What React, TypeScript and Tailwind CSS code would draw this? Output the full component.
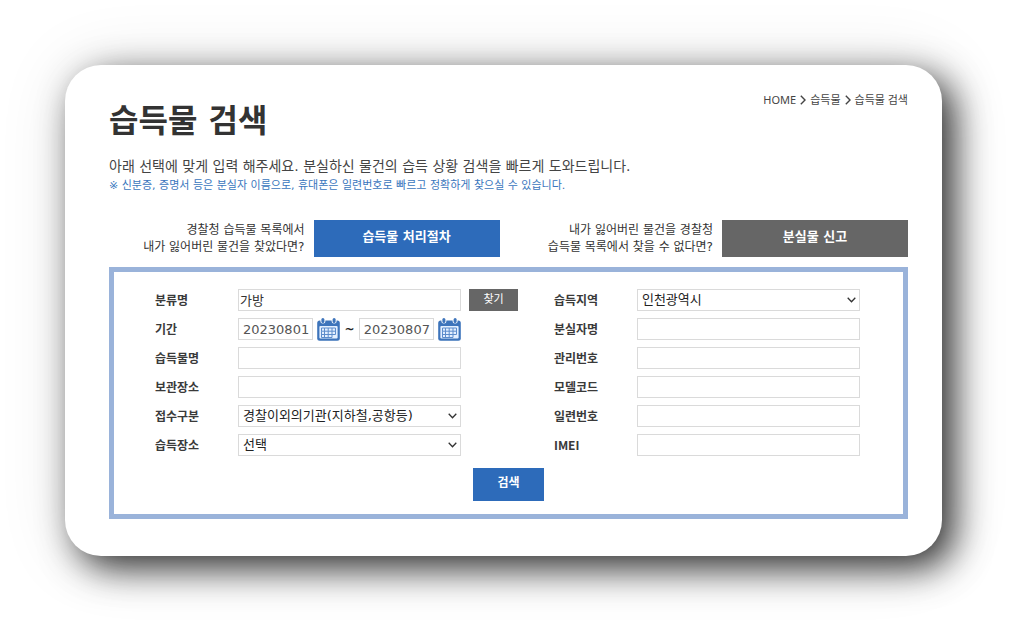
import React, { useState } from "react";

interface Field {
  id: string;
  label: string;
  options?: string[];
}

const leftFields: Field[] = [
  { id: "itemName", label: "습득물명" },
  { id: "storage", label: "보관장소" },
  { id: "receipt", label: "접수구분", options: ["경찰이외의기관(지하철,공항등)", "경찰관서"] },
  { id: "place", label: "습득장소", options: ["선택", "지하철", "공항"] },
];

const rightFields: Field[] = [
  { id: "region", label: "습득지역", options: ["인천광역시", "서울특별시", "부산광역시"] },
  { id: "owner", label: "분실자명" },
  { id: "manageNo", label: "관리번호" },
  { id: "model", label: "모델코드" },
  { id: "serial", label: "일련번호" },
  { id: "imei", label: "IMEI" },
];

const inputClass =
  "block h-[22px] w-full rounded-none border border-[#dadada] bg-white px-px pb-px text-[13px] leading-5 text-[#333] outline-none";

const ChevronRight = () => (
  <svg className="h-[10px] w-[6px]" viewBox="0 0 6 10" fill="none" stroke="#444" strokeWidth="1.4" aria-hidden="true">
    <path d="M0.8 0.8L5 5L0.8 9.2" />
  </svg>
);

const CalendarIcon = () => (
  <svg className="h-[23px] w-[23px]" viewBox="0 0 23 23" aria-hidden="true">
    <rect x="0.2" y="2.5" width="22.6" height="20.3" rx="2.5" fill="#3d74bb" />
    <rect x="2.4" y="8" width="18.2" height="12.4" rx="1" fill="#e3efff" />
    <rect x="3.4" y="-1" width="5" height="6.6" rx="2.5" fill="#fff" />
    <rect x="14.6" y="-1" width="5" height="6.6" rx="2.5" fill="#fff" />
    <rect x="4.4" y="0" width="3" height="5" rx="1.5" fill="#3d74bb" />
    <rect x="15.6" y="0" width="3" height="5" rx="1.5" fill="#3d74bb" />
    <path
      d="M7.5 10H18.5V16.5H4.5M4.5 13.2H18.5M4.5 13.2V19.5H15V16.5M7.5 10V19.5M11.2 10V19.5M15 10V16.5M4.5 13.2V10H7.5"
      fill="none"
      stroke="#5c8ccb"
      strokeWidth="1"
    />
  </svg>
);

const FormRow = ({ id, label, children }: { id: string; label: string; children: React.ReactNode }) => (
  <div className="flex h-[22px] items-center">
    <label
      htmlFor={id}
      className={`w-[83px] shrink-0 text-xs font-bold text-[#3a3a3a] ${
        label === "IMEI" ? "font-['Noto_Sans_CJK_KR',sans-serif]" : "pt-px"
      }`}
    >
      {label}
    </label>
    {children}
  </div>
);

const FieldControl = ({ id, options }: Field) => (
  <div className="relative w-[223px]">
    {options ? (
      <>
        <select
          id={id}
          className="block h-[22px] w-full appearance-none rounded-none border border-[#dadada] bg-white pr-5 pl-1 text-[13px] leading-5 text-[#222] outline-none"
        >
          {options.map((option) => (
            <option key={option}>{option}</option>
          ))}
        </select>
        <svg
          className="pointer-events-none absolute top-2 right-1 h-[6px] w-[9px]"
          viewBox="0 0 9 6"
          fill="none"
          stroke="#333"
          strokeWidth="1.3"
          aria-hidden="true"
        >
          <path d="M0.7 0.8L4.5 4.7L8.3 0.8" />
        </svg>
      </>
    ) : (
      <input id={id} type="text" className={inputClass} />
    )}
  </div>
);

const App: React.FC = () => {
  const [category, setCategory] = useState("가방");
  const [startDate, setStartDate] = useState("20230801");
  const [endDate, setEndDate] = useState("20230807");

  return (
    <div className="min-h-screen overflow-hidden bg-white pt-[65px] pr-[82px] pb-16 pl-[65px] font-['DejaVu_Sans','Noto_Sans_CJK_KR',sans-serif]">
      <main className="rounded-[36px] bg-white pt-[27px] pr-[34px] pb-[37px] pl-11 shadow-[12px_12px_36px_rgba(0,0,0,0.8),2px_2px_70px_rgba(0,0,0,0.12)]">
        {/* Title and breadcrumb */}
        <header className="flex items-start justify-between">
          <h1 className="pt-[9px] text-[32px] leading-10 font-bold text-[#333]">습득물 검색</h1>
          <nav
            aria-label="breadcrumb"
            className="flex items-center gap-1 font-['Noto_Sans','Noto_Sans_CJK_KR',sans-serif] text-[11px] leading-4 text-[#444]"
          >
            <a href="#home">HOME</a>
            <ChevronRight />
            <a href="#found">습득물</a>
            <ChevronRight />
            <a href="#search">습득물 검색</a>
          </nav>
        </header>
        <p className="mt-[13px] text-sm leading-6 text-[#444]">
          아래 선택에 맞게 입력 해주세요. 분실하신 물건의 습득 상황 검색을 빠르게 도와드립니다.
        </p>
        <p className="text-[11px] leading-4 text-[#3a76bd]">
          ※ 신분증, 증명서 등은 분실자 이름으로, 휴대폰은 일련번호로 빠르고 정확하게 찾으실 수 있습니다.
        </p>

        {/* Shortcuts */}
        <div className="mt-[26px] grid grid-cols-2 gap-[18px]">
          <div className="flex items-center justify-end gap-[9px]">
            <p className="text-right text-xs leading-[17px] text-[#333]">
              경찰청 습득물 목록에서
              <br />
              내가 잃어버린 물건을 찾았다면?
            </p>
            <button className="h-[37px] w-[186px] shrink-0 bg-[#2d6bba] pb-1 text-[13px] font-bold text-white">
              습득물 처리절차
            </button>
          </div>
          <div className="flex items-center justify-end gap-[9px]">
            <p className="text-right text-xs leading-[17px] text-[#333]">
              내가 잃어버린 물건을 경찰청
              <br />
              습득물 목록에서 찾을 수 없다면?
            </p>
            <button className="h-[37px] w-[186px] shrink-0 bg-[#666] pb-1 text-[13px] font-bold text-white">
              분실물 신고
            </button>
          </div>
        </div>

        {/* Search form */}
        <form
          className="mt-[10px] border-5 border-[#9ab3da] pt-[17px] pb-[13px]"
          onSubmit={(e) => e.preventDefault()}
        >
          <div className="grid grid-cols-[8fr_7fr] pl-[41px]">
            <div className="flex flex-col gap-[7px]">
              <FormRow id="category" label="분류명">
                <div className="w-[223px]">
                  <input
                    id="category"
                    type="text"
                    value={category}
                    onChange={(e) => setCategory(e.target.value)}
                    className={inputClass}
                  />
                </div>
                <button type="button" className="ml-2 h-[22px] w-[49px] bg-[#666] text-[11px] text-white">
                  찾기
                </button>
              </FormRow>
              <FormRow id="startDate" label="기간">
                <div className="flex w-[223px] items-center justify-between">
                  <input
                    id="startDate"
                    type="text"
                    value={startDate}
                    onChange={(e) => setStartDate(e.target.value)}
                    className="h-[22px] w-[75px] border border-[#dadada] pl-1 text-[13px] text-[#555] outline-none"
                  />
                  <button type="button" aria-label="시작일 선택">
                    <CalendarIcon />
                  </button>
                  <span className="text-xs font-bold text-[#222]">~</span>
                  <input
                    aria-label="종료일"
                    type="text"
                    value={endDate}
                    onChange={(e) => setEndDate(e.target.value)}
                    className="h-[22px] w-[75px] border border-[#dadada] pl-1 text-[13px] text-[#555] outline-none"
                  />
                  <button type="button" aria-label="종료일 선택">
                    <CalendarIcon />
                  </button>
                </div>
              </FormRow>
              {leftFields.map((field) => (
                <FormRow key={field.id} id={field.id} label={field.label}>
                  <FieldControl {...field} />
                </FormRow>
              ))}
            </div>
            <div className="flex flex-col gap-[7px]">
              {rightFields.map((field) => (
                <FormRow key={field.id} id={field.id} label={field.label}>
                  <FieldControl {...field} />
                </FormRow>
              ))}
            </div>
          </div>
          <button
            type="submit"
            className="mx-auto mt-3 block h-[33px] w-[71px] bg-[#2d6bba] pb-1 text-xs font-bold text-white"
          >
            검색
          </button>
        </form>
      </main>
    </div>
  );
};

export default App;
